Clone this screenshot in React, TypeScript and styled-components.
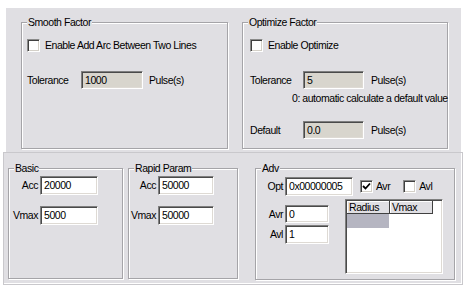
import styled, { createGlobalStyle } from "styled-components";

const GlobalStyle = createGlobalStyle`
  body {
    margin: 0;
    background: #ffffff;
    font-family: "Liberation Sans", Arial, sans-serif;
    font-size: 10.5px;
    letter-spacing: -0.45px;
    color: #000;
  }
`;

const Page = styled.div`
  width: 471px;
  height: 289px;
  padding-top: 8px;
  box-sizing: border-box;
  background: #fff;
`;

const TopPanel = styled.div`
  width: 455px;
  height: 144px;
  margin-left: 6px;
  padding: 14px 0 0 15px;
  box-sizing: border-box;
  background: #e0dfe3;
  display: flex;
  gap: 14px;
  align-items: flex-start;
`;

const BottomPanel = styled.div`
  width: 460px;
  height: 133px;
  margin-left: 3px;
  padding: 15px 0 0 4px;
  box-sizing: border-box;
  background: #e0dfe3;
  border: 1px solid #c9c8cc;
  box-shadow: inset -1px -1px 0 #fff;
  display: flex;
  align-items: flex-start;
`;

const GroupBox = styled.div<{ $w: number; $h: number; $ml?: number }>`
  position: relative;
  width: ${(p) => p.$w}px;
  height: ${(p) => p.$h}px;
  margin-left: ${(p) => p.$ml ?? 0}px;
  box-sizing: border-box;
  border: 1px solid #a5a4a8;
  box-shadow: 1px 1px 0 #fff, inset 1px 1px 0 #fff;
  flex-shrink: 0;
`;

const GroupTitle = styled.span`
  position: absolute;
  top: -7px;
  left: 5px;
  padding: 0 1px;
  line-height: 13px;
  background: #e0dfe3;
  white-space: nowrap;
`;

const Body = styled.div<{ $pt: number; $pl: number }>`
  display: flex;
  flex-direction: column;
  padding: ${(p) => p.$pt}px 0 0 ${(p) => p.$pl}px;
`;

const Row = styled.div<{ $mt?: number }>`
  display: flex;
  align-items: center;
  margin-top: ${(p) => p.$mt ?? 0}px;
  white-space: nowrap;
`;

const Label = styled.div<{ $w: number; $right?: boolean }>`
  width: ${(p) => p.$w}px;
  flex-shrink: 0;
  display: flex;
  justify-content: ${(p) => (p.$right ? "flex-end" : "flex-start")};
  white-space: nowrap;
  line-height: 13px;
`;

const Field = styled.div<{ $w: number; $h?: number; $disabled?: boolean; $ml?: number }>`
  width: ${(p) => p.$w}px;
  height: ${(p) => p.$h ?? 19}px;
  margin-left: ${(p) => p.$ml ?? 0}px;
  box-sizing: border-box;
  flex-shrink: 0;
  background: ${(p) => (p.$disabled ? "#d8d5cd" : "#ffffff")};
  border-style: solid;
  border-width: 1px;
  border-color: #7f7f7f #ffffff #ffffff #7f7f7f;
  box-shadow: inset 1px 1px 0 #4a4a4a, inset -1px -1px 0 #dedad4;
  padding: 0 0 0 3px;
  display: flex;
  align-items: center;
  line-height: 13px;
`;

const Text = styled.span<{ $ml?: number }>`
  margin-left: ${(p) => p.$ml ?? 0}px;
  line-height: 13px;
  white-space: nowrap;
`;

const Note = styled.div<{ $ml: number; $mt: number }>`
  margin: ${(p) => p.$mt}px 0 0 ${(p) => p.$ml}px;
  line-height: 13px;
  white-space: nowrap;
`;

const CheckBox = styled.div<{ $ml?: number }>`
  width: 13px;
  height: 13px;
  margin-left: ${(p) => p.$ml ?? 0}px;
  box-sizing: border-box;
  flex-shrink: 0;
  background: #fff;
  border-style: solid;
  border-width: 1px;
  border-color: #8a8a8a #ffffff #ffffff #8a8a8a;
  box-shadow: inset 1px 1px 0 #404040, inset -1px -1px 0 #d4d0c8;
  display: flex;
  align-items: center;
  justify-content: center;
`;

const Split = styled.div`
  display: flex;
  align-items: flex-start;
  margin-top: 3px;
`;

const FieldColumn = styled.div`
  display: flex;
  flex-direction: column;
  gap: 2px;
  margin-top: 6px;
`;

const ListView = styled.div`
  width: 98px;
  height: 75px;
  margin-left: 16px;
  box-sizing: border-box;
  background: #fff;
  border-style: solid;
  border-width: 1px;
  border-color: #7f7f7f #ffffff #ffffff #7f7f7f;
  box-shadow: inset 1px 1px 0 #4a4a4a, inset -1px -1px 0 #dedad4;
  padding: 1px 0 0 1px;
`;

const ListHeader = styled.div`
  display: flex;
  height: 13px;
`;

const HeaderCell = styled.div<{ $w: number }>`
  width: ${(p) => p.$w}px;
  box-sizing: border-box;
  background: #e0dfe3;
  border-right: 1px solid #404040;
  border-bottom: 1px solid #404040;
  box-shadow: inset 1px 1px 0 #fff;
  padding-left: 2px;
  line-height: 12px;
  overflow: hidden;
  white-space: nowrap;
`;

const ListRow = styled.div`
  display: flex;
  height: 14px;
`;

const Cell = styled.div<{ $w: number; $selected?: boolean }>`
  width: ${(p) => p.$w}px;
  background: ${(p) => (p.$selected ? "#b5b5c1" : "#fff")};
`;

const Check = () => (
  <svg width="9" height="9" viewBox="0 0 9 9">
    <path d="M1 4 L3.5 6.5 L8 1.5" fill="none" stroke="#000" strokeWidth="1.8" />
  </svg>
);

export default function App() {
  return (
    <>
      <GlobalStyle />
      <Page>
        <TopPanel>
          <GroupBox $w={207} $h={127}>
            <GroupTitle>Smooth Factor</GroupTitle>
            <Body $pt={16} $pl={5}>
              <Row>
                <CheckBox />
                <Text $ml={5}>Enable Add Arc Between Two Lines</Text>
              </Row>
              <Row $mt={19}>
                <Label $w={54}>Tolerance</Label>
                <Field $w={62} $h={18} $disabled>1000</Field>
                <Text $ml={6}>Pulse(s)</Text>
              </Row>
            </Body>
          </GroupBox>
          <GroupBox $w={206} $h={127}>
            <GroupTitle>Optimize Factor</GroupTitle>
            <Body $pt={16} $pl={7}>
              <Row>
                <CheckBox />
                <Text $ml={5}>Enable Optimize</Text>
              </Row>
              <Row $mt={19}>
                <Label $w={53}>Tolerance</Label>
                <Field $w={61} $h={18} $disabled>5</Field>
                <Text $ml={7}>Pulse(s)</Text>
              </Row>
              <Note $ml={42} $mt={3}>0: automatic calculate a default value</Note>
              <Row $mt={16}>
                <Label $w={53}>Default</Label>
                <Field $w={61} $h={18} $disabled>0.0</Field>
                <Text $ml={7}>Pulse(s)</Text>
              </Row>
            </Body>
          </GroupBox>
        </TopPanel>
        <BottomPanel>
          <GroupBox $w={115} $h={111}>
            <GroupTitle>Basic</GroupTitle>
            <Body $pt={7} $pl={0}>
              <Row>
                <Label $w={29} $right>Acc</Label>
                <Field $w={58} $ml={2}>20000</Field>
              </Row>
              <Row $mt={11}>
                <Label $w={29} $right>Vmax</Label>
                <Field $w={58} $ml={2}>5000</Field>
              </Row>
            </Body>
          </GroupBox>
          <GroupBox $w={110} $h={111} $ml={5}>
            <GroupTitle>Rapid Param</GroupTitle>
            <Body $pt={7} $pl={0}>
              <Row>
                <Label $w={27} $right>Acc</Label>
                <Field $w={56} $ml={2}>50000</Field>
              </Row>
              <Row $mt={11}>
                <Label $w={27} $right>Vmax</Label>
                <Field $w={56} $ml={2}>50000</Field>
              </Row>
            </Body>
          </GroupBox>
          <GroupBox $w={200} $h={112} $ml={17}>
            <GroupTitle>Adv</GroupTitle>
            <Body $pt={8} $pl={0}>
              <Row>
                <Label $w={27} $right>Opt</Label>
                <Field $w={68} $ml={2}>0x00000005</Field>
                <CheckBox $ml={7}>
                  <Check />
                </CheckBox>
                <Text $ml={3}>Avr</Text>
                <CheckBox $ml={13} />
                <Text $ml={3}>Avl</Text>
              </Row>
              <Split>
                <FieldColumn>
                  <Row>
                    <Label $w={27} $right>Avr</Label>
                    <Field $w={44} $h={18} $ml={2}>0</Field>
                  </Row>
                  <Row>
                    <Label $w={27} $right>Avl</Label>
                    <Field $w={44} $ml={2}>1</Field>
                  </Row>
                </FieldColumn>
                <ListView>
                  <ListHeader>
                    <HeaderCell $w={43}>Radius</HeaderCell>
                    <HeaderCell $w={43}>Vmax</HeaderCell>
                  </ListHeader>
                  <ListRow>
                    <Cell $w={42} $selected />
                    <Cell $w={44} />
                  </ListRow>
                </ListView>
              </Split>
            </Body>
          </GroupBox>
        </BottomPanel>
      </Page>
    </>
  );
}
